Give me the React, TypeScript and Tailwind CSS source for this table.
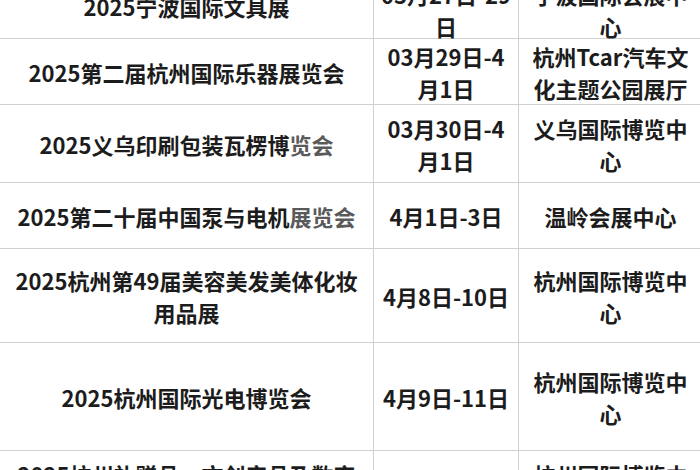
import React from 'react';

type Row = {
  name: React.ReactNode[];
  date: string[];
  place: string[];
  h: string;
  nameFix?: string;
};

const soft = 'text-[#5a5a5a]';

const rows: Row[] = [
  {
    name: ['2025宁波国际文具展'],
    date: ['03月27日-29', '日'],
    place: ['宁波国际会展中', '心'],
    h: 'h-[57px]',
    nameFix: 'pb-[8px]',
  },
  {
    name: ['2025第二届杭州国际乐器展览会'],
    date: ['03月29日-4', '月1日'],
    place: ['杭州Tcar汽车文', '化主题公园展厅'],
    h: 'h-[66px]',
  },
  {
    name: [
      <>
        2025义乌印刷包装瓦楞博<span className={soft}>览会</span>
      </>,
    ],
    date: ['03月30日-4', '月1日'],
    place: ['义乌国际博览中', '心'],
    h: 'h-[78px]',
  },
  {
    name: [
      <>
        2025第二十届中国泵与电机<span className={soft}>展览会</span>
      </>,
    ],
    date: ['4月1日-3日'],
    place: ['温岭会展中心'],
    h: 'h-[66px]',
  },
  {
    name: ['2025杭州第49届美容美发美体化妆', '用品展'],
    date: ['4月8日-10日'],
    place: ['杭州国际博览中', '心'],
    h: 'h-[94px]',
  },
  {
    name: ['2025杭州国际光电博览会'],
    date: ['4月9日-11日'],
    place: ['杭州国际博览中', '心'],
    h: 'h-[108px]',
  },
  {
    name: ['2025杭州礼赠品、文创产品及数字', '文化展'],
    date: ['4月10日-12日'],
    place: ['杭州国际博览中', '心'],
    h: 'h-[78px]',
  },
];

const Cell = ({ lines, className }: { lines: React.ReactNode[]; className: string }) => (
  <div className={`flex flex-col items-center justify-center border-b border-[#d0d0d0] text-center ${className}`}>
    {lines.map((line, i) => (
      <div key={i} className="whitespace-nowrap">
        {line}
      </div>
    ))}
  </div>
);

const App = () => {
  return (
    <div className="w-[700px] h-[470px] overflow-hidden bg-white">
      <div
        className="-mt-[18px] grid w-[702px] grid-cols-[373px_145px_1fr] text-[22px] leading-[32px] font-bold text-[#1c1c1c]"
        style={{ fontFamily: '"Noto Sans CJK SC", "Noto Sans", sans-serif' }}
      >
        {rows.map((row, index) => (
          <React.Fragment key={index}>
            <Cell lines={row.name} className={`${row.h} ${row.nameFix ?? ''}`} />
            <Cell lines={row.date} className={`${row.h} border-l`} />
            <Cell lines={row.place} className={`${row.h} border-l`} />
          </React.Fragment>
        ))}
      </div>
    </div>
  );
};

export default App;
